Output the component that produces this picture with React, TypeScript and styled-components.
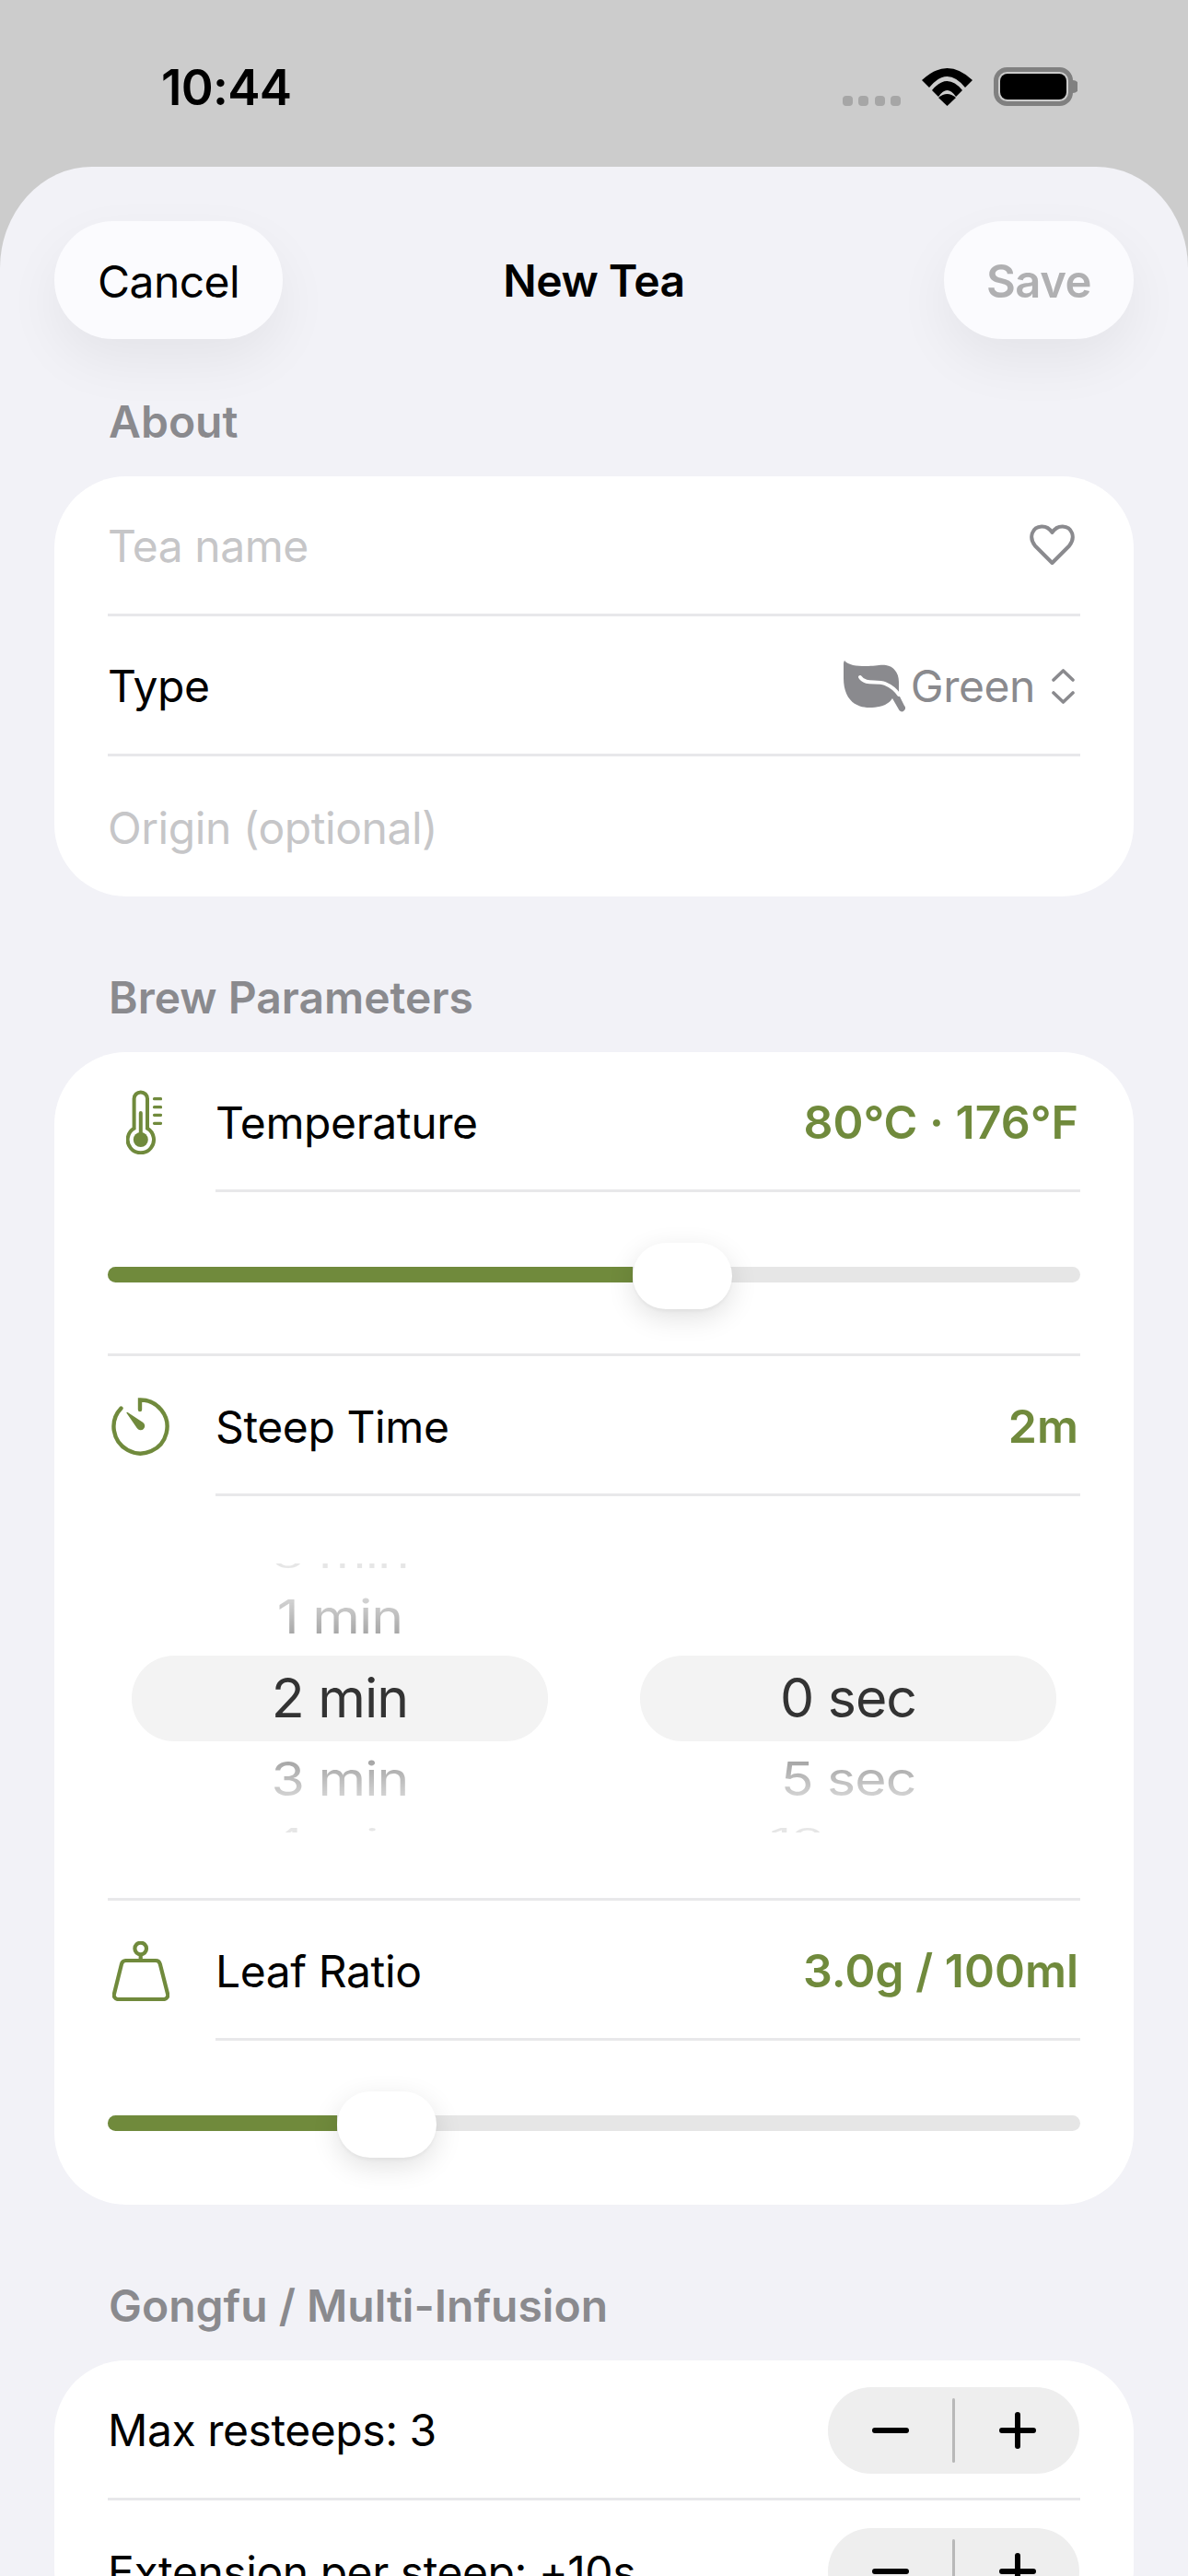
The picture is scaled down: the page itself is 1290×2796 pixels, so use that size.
import React from "react";
import styled, { createGlobalStyle } from "styled-components";

const GREEN = "#708a3c";
const GREY = "#8a8a8e";
const LINE = "#e8e8ea";

const Global = createGlobalStyle`
  html, body { margin: 0; padding: 0; height: 2796px; overflow: hidden; background: #cccccc; }
  * { box-sizing: border-box; }
  body { font-family: Inter, "Noto Sans", sans-serif; -webkit-font-smoothing: antialiased; }
`;

const Page = styled.div`
  width: 1290px;
  height: 2796px;
  overflow: hidden;
  background: #cccccc;
`;

const StatusBar = styled.div`
  height: 181px;
  padding: 63px 120px 0 175px;
  display: flex;
  justify-content: space-between;
  align-items: flex-start;
`;
const Clock = styled.div`
  font-size: 53px;
  font-weight: 600;
  line-height: 64px;
  color: #000;
  letter-spacing: -0.7px;
`;
const StatusIcons = styled.div`
  display: flex;
  align-items: flex-end;
  height: 52px;
`;
const Dots = styled.div`
  display: flex;
  gap: 6.5px;
  margin-right: 23px;
`;
const Dot = styled.span`
  width: 11px;
  height: 11px;
  border-radius: 4px;
  background: #a6a6a6;
`;
const Battery = styled.svg`
  margin-left: 23px;
  display: block;
`;

const Sheet = styled.div`
  height: 2615px;
  background: #f2f2f7;
  border-radius: 100px 100px 0 0 / 110px 110px 0 0;
  padding: 59px 59px 0;
`;

const Header = styled.div`
  height: 128px;
  display: grid;
  grid-template-columns: 1fr auto 1fr;
  align-items: center;
  margin-bottom: 60px;
`;
const NavButton = styled.div<{ $muted?: boolean }>`
  height: 128px;
  width: ${(p) => (p.$muted ? "206px" : "248px")};
  justify-self: ${(p) => (p.$muted ? "end" : "start")};
  padding-top: 2px;
  border-radius: 64px;
  background: #fbfbfe;
  box-shadow: 0 24px 60px rgba(0, 0, 0, 0.06);
  display: flex;
  align-items: center;
  justify-content: center;
  font-size: ${(p) => (p.$muted ? "49px" : "48px")};
  font-weight: ${(p) => (p.$muted ? 600 : 400)};
  letter-spacing: ${(p) => (p.$muted ? "-0.5px" : "-0.6px")};
  color: ${(p) => (p.$muted ? "#b0b0b2" : "#000")};
`;
const Title = styled.div`
  font-size: 48px;
  font-weight: 600;
  letter-spacing: -0.5px;
  color: #000;
`;

const SectionLabel = styled.div`
  height: 60px;
  line-height: 60px;
  padding-left: 59px;
  margin-bottom: 29px;
  font-size: 48px;
  font-weight: 600;
  letter-spacing: 0;
  color: ${GREY};
`;
const Card = styled.div`
  background: #fff;
  border-radius: 78px;
  padding: 0 58px;
  margin-bottom: 80px;
`;
const Row = styled.div<{ $last?: boolean }>`
  height: 152px;
  padding-top: 2px;
  display: flex;
  align-items: center;
  justify-content: space-between;
  border-bottom: ${(p) => (p.$last ? "none" : `3px solid ${LINE}`)};
  font-size: 48px;
  letter-spacing: -0.45px;
  color: #000;
`;
const Placeholder = styled.span`
  color: #c6c6c8;
`;
const TypeValue = styled.div`
  display: flex;
  align-items: center;
  margin-right: 6px;
  color: ${GREY};
`;
const TypeName = styled.span`
  margin: 0 18px 0 6px;
`;
const GlyphSvg = styled.svg`
  display: block;
  flex: none;
`;
const HeartSvg = styled(GlyphSvg)`
  margin: 0 6px 3px 0;
`;
const ThermoSvg = styled(GlyphSvg)`
  margin-left: 7px;
`;

const ParamRow = styled.div`
  height: 152px;
  display: flex;
  align-items: stretch;
`;
const ParamIcon = styled.div`
  width: 117px;
  flex: none;
  display: flex;
  align-items: center;
`;
const IconBox = styled.div`
  width: 71px;
  display: flex;
  justify-content: center;
`;
const ParamBody = styled.div`
  flex: 1;
  padding-top: 3px;
  display: flex;
  align-items: center;
  justify-content: space-between;
  border-bottom: 3px solid ${LINE};
  font-size: 48px;
  letter-spacing: -0.4px;
  color: #000;
`;
const ParamValue = styled.span`
  color: ${GREEN};
  font-size: 50px;
  font-weight: 600;
  letter-spacing: 0;
  margin-right: 2px;
`;

const SliderBlock = styled.div<{ $last?: boolean }>`
  height: 178px;
  padding-top: ${(p) => (p.$last ? "0" : "3px")};
  display: flex;
  align-items: center;
  border-bottom: ${(p) => (p.$last ? "none" : `3px solid ${LINE}`)};
`;
const Track = styled.div`
  position: relative;
  width: 100%;
  height: 17px;
  border-radius: 9px;
  background: #e6e6e6;
`;
const Fill = styled.div`
  height: 100%;
  border-radius: 9px 0 0 9px;
  background: ${GREEN};
`;
const Thumb = styled.div`
  position: absolute;
  top: calc(50% + 2px);
  width: 108px;
  height: 72px;
  transform: translateY(-50%);
  border-radius: 36px;
  background: #fff;
  box-shadow: 0 9px 30px rgba(0, 0, 0, 0.12), 0 3px 3px rgba(0, 0, 0, 0.03);
`;

const PickerBlock = styled.div`
  height: 439px;
  border-bottom: 3px solid ${LINE};
  display: grid;
  grid-template-columns: 452px 452px;
  justify-content: center;
  column-gap: 100px;
  align-items: center;
  padding-top: 2px;
`;
const Wheel = styled.div`
  height: 292px;
  overflow: hidden;
  display: flex;
  flex-direction: column;
  justify-content: center;
`;
const WheelItem = styled.div<{ $level: number }>`
  flex: none;
  display: flex;
  align-items: center;
  justify-content: center;
  height: ${(p) => [93, 83, 45][p.$level]}px;
  background: ${(p) => (p.$level === 0 ? "#f3f3f3" : "transparent")};
  border-radius: ${(p) => (p.$level === 0 ? "46px" : "0")};
`;
const WheelText = styled.span<{ $level: number; $below: boolean }>`
  display: inline-block;
  font-size: 59px;
  letter-spacing: -1px;
  line-height: 70px;
  color: #333333;
  transform: scaleY(${(p) => [1, 0.87, 0.5][p.$level]});
  mask-image: ${(p) =>
    p.$level === 0
      ? "none"
      : p.$level === 1
        ? `linear-gradient(to ${p.$below ? "top" : "bottom"}, rgba(0,0,0,0.15), rgba(0,0,0,0.5))`
        : "linear-gradient(rgba(0,0,0,0.12), rgba(0,0,0,0.12))"};
`;

const Stepper = styled.div`
  width: 273px;
  height: 94px;
  margin-right: 1px;
  border-radius: 47px;
  background: #eeeeee;
  display: flex;
  align-items: center;
`;
const StepButton = styled.div`
  flex: 1;
  display: flex;
  align-items: center;
  justify-content: center;
`;
const StepDivider = styled.div`
  width: 3px;
  height: 70px;
  border-radius: 2px;
  background: #b8b8b8;
`;

const Heart = () => (
  <HeartSvg width="49" height="45" viewBox="0 0 49 45" fill="none" stroke={GREY} strokeWidth="4" strokeLinejoin="round">
    <path d="M24.5 42 L6 23.5 C-1.5 14 3 3 13 2.5 C18 2.3 22 5 24.5 9 C27 5 31 2.3 36 2.5 C46 3 50.5 14 43 23.5 Z" />
  </HeartSvg>
);
const Leaf = () => (
  <GlyphSvg width="67" height="58" viewBox="0 0 67 58" fill="none">
    <path
      fill={GREY}
      d="M1 1 C5 6 14 7 24 7 C34 7 40 5 46 6 C54 7 60 14 60 24 L60 38 L66 50 a3.2 3.2 0 0 1 -5.5 5 L53 42 C48 50 38 52 28 52 C10 52 0 40 0 20 C0 12 -1 4 1 1Z"
    />
    <path stroke="#fff" strokeWidth="4" strokeLinecap="round" d="M18 19 C24 28 36 22 45 26 C52 29 56 32 60 38" />
  </GlyphSvg>
);
const Updown = () => (
  <GlyphSvg width="25" height="38" viewBox="0 0 25 38" fill="none" stroke={GREY} strokeWidth="3.6" strokeLinecap="round" strokeLinejoin="round">
    <path d="M2 12 L12.5 2 L23 12" />
    <path d="M2 26 L12.5 36 L23 26" />
  </GlyphSvg>
);
const Thermometer = () => (
  <ThermoSvg width="39" height="70" viewBox="0 0 39 70" fill="none" stroke={GREEN} strokeWidth="4" strokeLinecap="round">
    <path d="M8.6 41.8 V9.6 a7.2 7.2 0 0 1 14.4 0 V41.8 A14.2 14.2 0 1 1 8.6 41.8 Z" />
    <path d="M15.8 54 V25" />
    <circle cx="15.8" cy="54" r="8" fill={GREEN} stroke="none" />
    <path d="M30.5 9.7 H37.5 M30.5 18.7 H37.5 M30.5 27.3 H37.5 M30.5 36.3 H37.5" strokeWidth="3.2" />
  </ThermoSvg>
);
const Timer = () => (
  <GlyphSvg width="63" height="63" viewBox="0 0 63 63" fill="none" stroke={GREEN} strokeWidth="4.4" strokeLinecap="round">
    <path d="M31 13 V2.5 A29 29 0 1 1 10.5 11.5" />
    <path fill={GREEN} stroke="none" d="M16.3 16.6 a1 1 0 0 1 1.4 -0.6 L34 26.8 a4.6 4.6 0 1 1 -6.3 6.3 Z" />
  </GlyphSvg>
);
const Weight = () => (
  <GlyphSvg width="62" height="65" viewBox="0 0 62 65" fill="none" stroke={GREEN} strokeWidth="4.2" strokeLinejoin="round">
    <circle cx="30.7" cy="8" r="6.3" />
    <path d="M30.7 14 V21" />
    <path d="M14.5 21 H47 a5 5 0 0 1 4.8 3.7 L60 57 a4.5 4.5 0 0 1 -4.3 6 H6.3 a4.5 4.5 0 0 1 -4.3 -6 L10 24.7 a5 5 0 0 1 4.5 -3.7Z" />
  </GlyphSvg>
);
const Wifi = () => (
  <GlyphSvg width="55" height="41" viewBox="0 0 55 41" fill="#000">
    <path d="M0 13 Q27.5 -13 55 13 L47 21 Q27.5 -3 8 21 Z" />
    <path d="M11 24 Q27.5 4 44 24 L37 31 Q27.5 17 18 31 Z" />
    <path d="M18 32 Q27.5 24 37 32 L27.5 41 Z" />
  </GlyphSvg>
);
const BatteryIcon = () => (
  <Battery width="91" height="42" viewBox="0 0 91 42" fill="none">
    <rect x="2.5" y="2.5" width="81" height="37" rx="12" stroke="#808080" strokeWidth="5" />
    <rect x="7" y="7" width="72" height="28" rx="8" fill="#000" />
    <path d="M86 14 a7 7 0 0 1 0 14 Z" fill="#808080" />
  </Battery>
);
const Minus = () => (
  <GlyphSvg width="40" height="40" viewBox="0 0 40 40" stroke="#000" strokeWidth="6" strokeLinecap="round">
    <path d="M3 20 H37" />
  </GlyphSvg>
);
const Plus = () => (
  <GlyphSvg width="40" height="40" viewBox="0 0 40 40" stroke="#000" strokeWidth="6" strokeLinecap="round">
    <path d="M3 20 H37 M20 3 V37" />
  </GlyphSvg>
);

const Slider = ({ at, last }: { at: number; last?: boolean }) => (
  <SliderBlock $last={last}>
    <Track>
      <Fill style={{ width: at }} />
      <Thumb style={{ left: at }} />
    </Track>
  </SliderBlock>
);

const Param = ({ icon, label, value }: { icon: React.ReactNode; label: string; value: string }) => (
  <ParamRow>
    <ParamIcon>
      <IconBox>{icon}</IconBox>
    </ParamIcon>
    <ParamBody>
      <span>{label}</span>
      <ParamValue>{value}</ParamValue>
    </ParamBody>
  </ParamRow>
);

const PickerColumn = ({ items }: { items: string[] }) => (
  <Wheel>
    {items.map((t, i) => (
      <WheelItem key={i} $level={Math.abs(i - 2)}>
        <WheelText $level={Math.abs(i - 2)} $below={i > 2}>
          {t}
        </WheelText>
      </WheelItem>
    ))}
  </Wheel>
);

const StepperControl = () => (
  <Stepper>
    <StepButton>
      <Minus />
    </StepButton>
    <StepDivider />
    <StepButton>
      <Plus />
    </StepButton>
  </Stepper>
);

export default function App() {
  return (
    <Page>
      <Global />
      <StatusBar>
        <Clock>10:44</Clock>
        <StatusIcons>
          <Dots>
            <Dot />
            <Dot />
            <Dot />
            <Dot />
          </Dots>
          <Wifi />
          <BatteryIcon />
        </StatusIcons>
      </StatusBar>
      <Sheet>
        <Header>
          <NavButton>Cancel</NavButton>
          <Title>New Tea</Title>
          <NavButton $muted>Save</NavButton>
        </Header>

        <SectionLabel>About</SectionLabel>
        <Card>
          <Row>
            <Placeholder>Tea name</Placeholder>
            <Heart />
          </Row>
          <Row>
            <span>Type</span>
            <TypeValue>
              <Leaf />
              <TypeName>Green</TypeName>
              <Updown />
            </TypeValue>
          </Row>
          <Row $last>
            <Placeholder>Origin (optional)</Placeholder>
          </Row>
        </Card>

        <SectionLabel>Brew Parameters</SectionLabel>
        <Card>
          <Param icon={<Thermometer />} label="Temperature" value="80°C · 176°F" />
          <Slider at={570} />
          <Param icon={<Timer />} label="Steep Time" value="2m" />
          <PickerBlock>
            <PickerColumn items={["0 min", "1 min", "2 min", "3 min", "4 min"]} />
            <PickerColumn items={["", "", "0 sec", "5 sec", "10 sec"]} />
          </PickerBlock>
          <Param icon={<Weight />} label="Leaf Ratio" value="3.0g / 100ml" />
          <Slider at={249} last />
        </Card>

        <SectionLabel>Gongfu / Multi-Infusion</SectionLabel>
        <Card>
          <Row>
            <span>Max resteeps: 3</span>
            <StepperControl />
          </Row>
          <Row $last>
            <span>Extension per steep: +10s</span>
            <StepperControl />
          </Row>
        </Card>
      </Sheet>
    </Page>
  );
}
